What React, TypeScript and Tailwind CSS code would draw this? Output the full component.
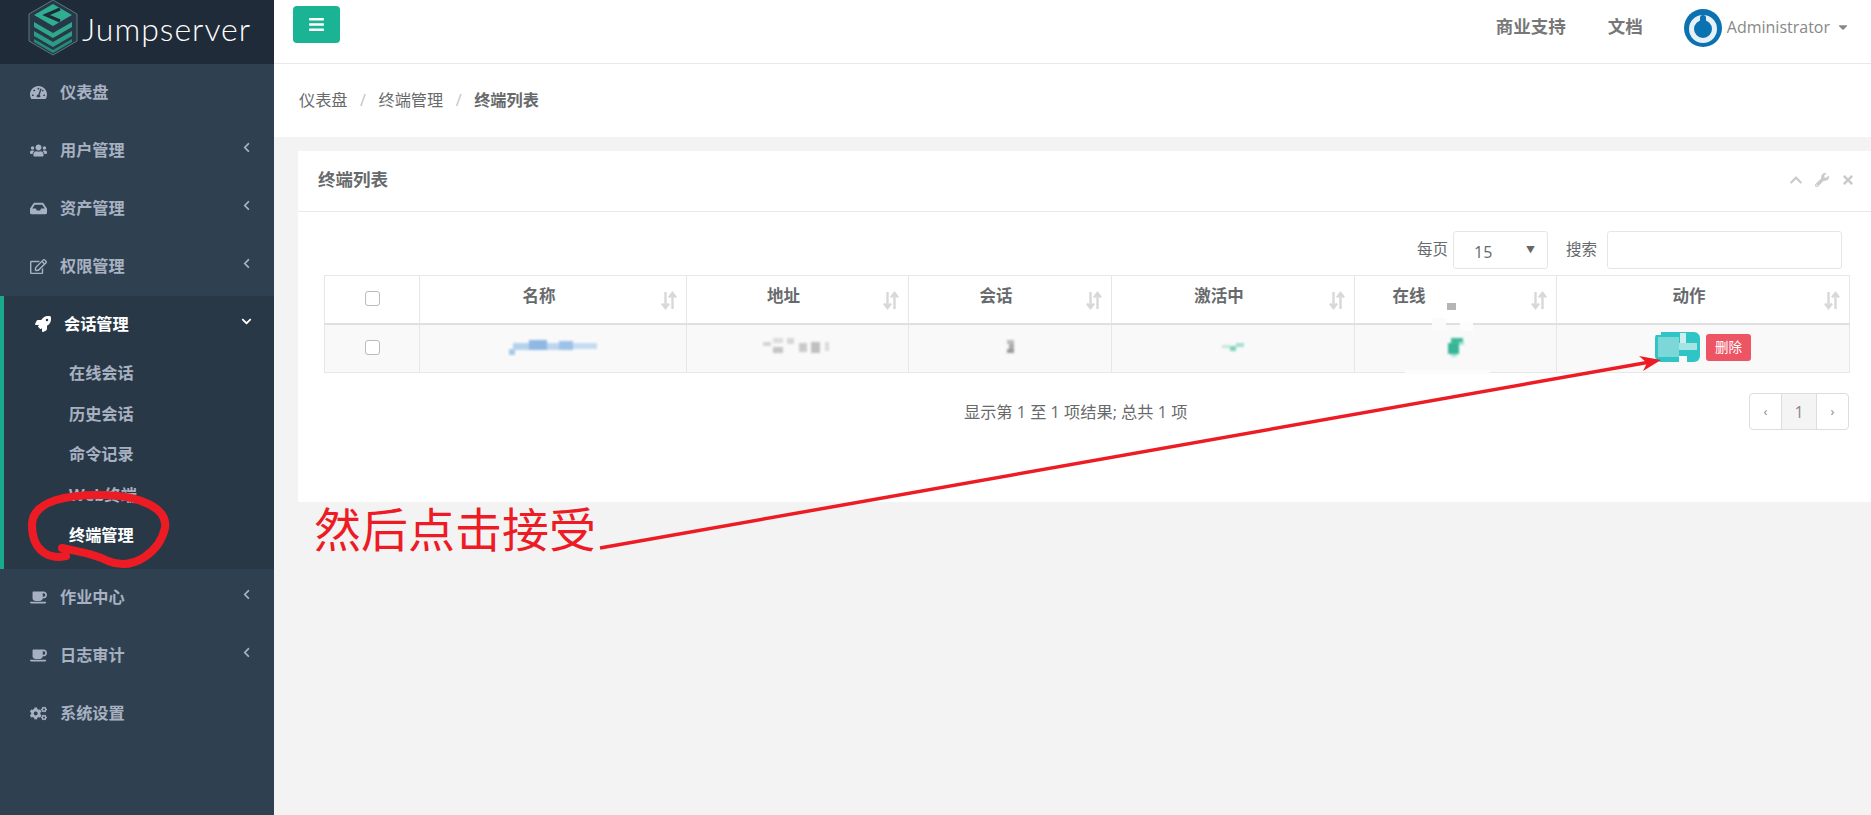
import { FaChevronDown, FaChevronLeft, FaChevronUp, FaCoffee, FaCogs, FaInbox, FaRegEdit, FaRocket, FaTachometerAlt, FaTimes, FaUsers, FaWrench, FaCaretDown, FaBars } from "react-icons/fa";
import type { ReactNode } from "react";

const cjk = "font-['Open_Sans','Noto_Sans_CJK_SC',sans-serif]";

function MenuItem({ icon, label, arrow }: { icon: ReactNode; label: string; arrow?: boolean }) {
  return (
    <div className="flex h-[58px] items-center pb-[2px] pl-[30px] pr-[22px] text-[16.2px] font-bold text-[#a7b1c2]">
      <span className="flex w-[30px] shrink-0 items-center text-[17px]">{icon}</span>
      <span className="flex-1">{label}</span>
      {arrow && <FaChevronLeft className="mb-1.5 text-[11px]" />}
    </div>
  );
}

function SubItem({ label, active }: { label: string; active?: boolean }) {
  return (
    <div className={`flex h-[40.5px] items-center pl-[65px] text-[16.2px] font-bold ${active ? "text-white" : "text-[#a7b1c2]"}`}>
      {label}
    </div>
  );
}

function Sidebar() {
  return (
    <aside className="flex w-[274px] shrink-0 flex-col bg-[#2f4050]">
      <div className="flex h-[64px] items-center bg-[#1f2b38] pl-7">
        <svg width="50" height="56" viewBox="0 0 50 56" className="mb-2 shrink-0">
          <polygon points="25,0 49,14 49,41 25,55 1,41 1,14" fill="#26384a" stroke="#5e7a78" strokeWidth="1" />
          <polygon points="25,4 44,15 25,26 6,15" fill="#2fae90" />
          <polygon points="6,22 25,33 44,22 44,27 25,38 6,27" fill="#2fa88a" />
          <polygon points="6,31 25,42 44,31 44,36 25,47 6,36" fill="#2b9c82" />
          <polygon points="6,39 25,50 44,39 44,42 25,53 6,42" fill="#258c75" />
          <polyline points="32,9 18,15 32,21" fill="none" stroke="#1f2b38" strokeWidth="3" />
        </svg>
        <span className="mb-[6px] ml-1 font-['Lato',sans-serif] text-[32px] font-light leading-none tracking-[1px] text-white">Jumpserver</span>
      </div>
      <MenuItem icon={<FaTachometerAlt />} label="仪表盘" />
      <MenuItem icon={<FaUsers />} label="用户管理" arrow />
      <MenuItem icon={<FaInbox />} label="资产管理" arrow />
      <MenuItem icon={<FaRegEdit />} label="权限管理" arrow />
      <div className="h-[273px] border-l-4 border-[#19aa8d] bg-[#293846]">
        <div className="flex h-[57px] items-center pb-[1px] pl-[31px] pr-[22px] text-[16.2px] font-bold text-white">
          <span className="flex w-[29px] shrink-0 items-center text-[16px]"><FaRocket /></span>
          <span className="flex-1">会话管理</span>
          <FaChevronDown className="mb-1.5 text-[11px]" />
        </div>
        <SubItem label="在线会话" />
        <SubItem label="历史会话" />
        <SubItem label="命令记录" />
        <SubItem label="Web终端" />
        <SubItem label="终端管理" active />
      </div>
      <MenuItem icon={<FaCoffee />} label="作业中心" arrow />
      <MenuItem icon={<FaCoffee />} label="日志审计" arrow />
      <MenuItem icon={<FaCogs />} label="系统设置" />
    </aside>
  );
}

function TopBar() {
  return (
    <header className="flex h-[64px] items-center border-b border-[#e7eaec] bg-white pl-[19px] pr-[21px]">
      <button className="mb-[14px] flex h-[37px] w-[47px] items-center justify-center rounded-[4px] bg-[#1ab394] text-[17px] text-white">
        <FaBars />
      </button>
      <div className="flex-1" />
      <span className="mb-[10px] text-[17.5px] font-bold text-[#777]">商业支持</span>
      <span className="mb-[10px] ml-[42px] text-[17.5px] font-bold text-[#777]">文档</span>
      <svg width="38" height="38" viewBox="0 0 38 38" className="mb-[8px] ml-[41px]">
        <circle cx="19" cy="19" r="19" fill="#0a72b0" />
        <circle cx="19" cy="20" r="11.5" fill="none" stroke="#e6f0f6" strokeWidth="5" />
        <rect x="16" y="6" width="6" height="17" rx="3" fill="#0a72b0" />
      </svg>
      <span className="mb-[10px] ml-[5px] text-[16px] text-[#888]">Administrator</span>
      <FaCaretDown className="mb-[9px] ml-[6px] text-[14px] text-[#888]" />
    </header>
  );
}

function SortIcon() {
  return (
    <svg width="16" height="19" viewBox="0 0 16 19" className="absolute right-[9px] top-[15px] text-[#d8d8d8]" fill="none" stroke="currentColor" strokeWidth="2.4">
      <path d="M4.5 1v15M1 12.5l3.5 4.5 3.5-4.5" />
      <path d="M11.5 18V3M8 6.5L11.5 2 15 6.5" />
    </svg>
  );
}

function Check() {
  return <span className="mx-auto block h-[15px] w-[15px] rounded-[3px] border border-[#bbb] bg-white" />;
}

function Th({ children, pad = "pr-[28px]" }: { children: ReactNode; pad?: string }) {
  return (
    <th className={`relative border-r border-[#e7e7e7] pb-[6px] text-center text-[16.5px] font-bold text-[#676a6c] ${pad}`}>
      {children}
      <SortIcon />
    </th>
  );
}

// pixelated, redacted bits of the screenshot
function Mosaic({ w, h, cells }: { w: number; h: number; cells: [number, number, number, number, string][] }) {
  return (
    <svg width={w} height={h} viewBox={`0 0 ${w} ${h}`} className="mx-auto block blur-[0.8px]">
      {cells.map(([x, y, cw, ch, fill], i) => (
        <rect key={i} x={x} y={y} width={cw} height={ch} fill={fill} />
      ))}
    </svg>
  );
}

function TerminalTable() {
  return (
    <table className="w-[1526px] table-fixed border border-[#e7e7e7] text-[14px]">
      <colgroup>
        <col className="w-[95px]" />
        <col className="w-[267px]" />
        <col className="w-[222px]" />
        <col className="w-[203px]" />
        <col className="w-[243px]" />
        <col className="w-[202px]" />
        <col />
      </colgroup>
      <thead>
        <tr className="h-[48px] border-b-2 border-[#e0e0e0]">
          <th className="border-r border-[#e7e7e7] pb-[2px]"><Check /></th>
          <Th>名称</Th>
          <Th>地址</Th>
          <Th>会话</Th>
          <Th>激活中</Th>
          <Th pad="pr-[93px]">在线</Th>
          <Th pad="pr-[28px] border-r-0">动作</Th>
        </tr>
      </thead>
      <tbody>
        <tr className="h-[49px] bg-[#f9f9f9]">
          <td className="border-r border-[#e7e7e7] pb-[2px]"><Check /></td>
          <td className="border-r border-[#e7e7e7] pb-[4px]">
            <Mosaic w={88} h={17} cells={[
              [0, 11, 6, 6, "#a9c9ea"], [4, 5, 16, 7, "#b4d1ee"], [20, 2, 18, 10, "#8fb8e2"],
              [38, 5, 12, 7, "#bcd6f0"], [50, 3, 14, 9, "#9dc2e8"], [64, 5, 24, 6, "#c4dbf2"],
            ]} />
          </td>
          <td className="border-r border-[#e7e7e7] pb-[4px]">
            <Mosaic w={70} h={16} cells={[
              [0, 4, 8, 4, "#d4d4d4"], [10, 0, 10, 5, "#dcdcdc"], [10, 9, 10, 6, "#c4c4c4"], [24, 0, 7, 6, "#d6d6d6"],
              [36, 5, 8, 9, "#cacaca"], [48, 4, 9, 11, "#c0c0c0"], [62, 4, 4, 9, "#dadada"],
            ]} />
          </td>
          <td className="border-r border-[#e7e7e7] pb-[4px]">
            <Mosaic w={9} h={13} cells={[[1, 0, 7, 4, "#bbb"], [3, 4, 5, 5, "#aaa"], [1, 9, 7, 4, "#999"]]} />
          </td>
          <td className="border-r border-[#e7e7e7] pb-[2px]">
            <Mosaic w={22} h={8} cells={[[0, 2, 8, 3, "#bfe9dc"], [8, 3, 6, 5, "#7fd2bb"], [14, 0, 8, 4, "#a5e0cf"]]} />
          </td>
          <td className="border-r border-[#e7e7e7] pb-[2px]">
            <Mosaic w={20} h={20} cells={[[2, 6, 11, 11, "#37b596"], [5, 1, 12, 6, "#3cbb9c"], [13, 5, 5, 3, "#a8e2d3"], [5, 17, 6, 3, "#b5e6d9"]]} />
          </td>
          <td className="pb-[2px]">
            <div className="ml-[98px] flex items-center gap-[6px]">
              <svg width="45" height="30" viewBox="0 0 45 30" className="blur-[0.4px]">
                <rect width="45" height="30" rx="6" fill="#2fc4c6" />
                <rect x="3" y="5" width="21" height="20" fill="#7cd8d8" />
                <rect x="24" y="11" width="18" height="7" fill="#a6e3e3" />
                <rect x="25" y="1" width="6" height="10" fill="#cdeeee" />
                <rect x="24" y="24" width="8" height="6" fill="#f9f9f9" />
                <rect x="0" y="0" width="6" height="3" fill="#f9f9f9" />
              </svg>
              <span className="flex h-[27px] w-[45px] items-center justify-center rounded-[3px] bg-[#ed5565] text-[13.5px] text-white">删除</span>
            </div>
          </td>
        </tr>
      </tbody>
    </table>
  );
}

function Pagination() {
  return (
    <div className="mr-[3px] flex h-[37px] overflow-hidden rounded-[4px] border border-[#ddd] text-[#888]">
      <span className="flex w-[31px] items-center justify-center text-[13px]">‹</span>
      <span className="flex w-[36px] items-center justify-center border-x border-[#ddd] bg-[#f4f4f4] text-[16px]">1</span>
      <span className="flex w-[31px] items-center justify-center text-[13px]">›</span>
    </div>
  );
}

function Card() {
  return (
    <section className="h-[351px] bg-white">
      <div className="flex h-[61px] items-center border-b border-[#e7eaec] pb-[3px] pl-5 pr-[16px]">
        <h2 className="flex-1 text-[17.5px] font-bold text-[#676a6c]">终端列表</h2>
        <div className="flex items-center gap-[12px] text-[#c8cacc]">
          <FaChevronUp className="text-[14px]" />
          <FaWrench className="text-[14px]" />
          <FaTimes className="text-[14px]" />
        </div>
      </div>
      <div className="pl-[26px] pr-[19px]">
        <div className="flex h-[63px] items-center justify-end pb-[6px] pr-[10px] pt-[19px] text-[15.5px] text-[#676a6c]">
          <span>每页</span>
          <div className="ml-[5px] flex h-[38px] w-[95px] items-center rounded-[3px] border border-[#e5e6e7] pl-[20px] pr-[12px]">
            <span className="flex-1 pt-[4px] text-[16px]">15</span>
            <span className="text-[9px] text-[#666]">▼</span>
          </div>
          <span className="ml-[18px]">搜索</span>
          <div className="ml-[10px] h-[38px] w-[235px] rounded-[3px] border border-[#e5e6e7]" />
        </div>
        <TerminalTable />
        <div className="relative mt-[20px] flex h-[37px] items-center justify-end">
          <span className="absolute left-[640px] mt-[2px] text-[16.2px] text-[#676a6c]">显示第 1 至 1 项结果; 总共 1 项</span>
          <Pagination />
        </div>
      </div>
    </section>
  );
}

function Annotations() {
  return (
    <>
      <svg width="1871" height="815" viewBox="0 0 1871 815" fill="none" className="pointer-events-none absolute left-0 top-0">
        {/* leftovers from the redaction around the online column */}
        <rect x="1447" y="303" width="9" height="7" fill="#b5b5b5" />
        <rect x="1432" y="318" width="14" height="12" fill="#fbfbfb" />
        <rect x="1460" y="322" width="13" height="9" fill="#fdfdfd" />
        <rect x="1405" y="370" width="85" height="4" fill="#fcfcfc" />
        <path
          d="M62 548 C80 552 92 553 108 561 C135 572 160 550 165 528 C168 508 140 496 105 495 C70 494 32 500 32 525 C32 550 48 560 66 556"
          stroke="#ed1c24"
          strokeWidth="8"
          strokeLinecap="round"
        />
        <path d="M600 548 L1650 362" stroke="#ed1c24" strokeWidth="3.5" />
        <polygon points="1661,360 1639,356 1647,363 1643,371" fill="#ed1c24" />
      </svg>
      <span className="absolute left-[314px] top-[495px] font-['Noto_Sans_CJK_SC',sans-serif] text-[47px] font-normal leading-[64px] text-[#ed1c24]">然后点击接受</span>
    </>
  );
}

export default function App() {
  return (
    <div className={`relative flex h-[815px] w-[1871px] overflow-hidden bg-[#f3f3f4] ${cjk}`}>
      <Sidebar />
      <main className="flex-1">
        <TopBar />
        <div className="flex h-[73px] items-center bg-white pl-[25px] text-[16.2px] text-[#676a6c]">
          <span>仪表盘</span>
          <span className="mx-[12.5px] text-[#c4c4c4]">/</span>
          <span>终端管理</span>
          <span className="mx-[12.5px] text-[#c4c4c4]">/</span>
          <span className="font-bold">终端列表</span>
        </div>
        <div className="pl-[24px] pt-[14px]">
          <Card />
        </div>
      </main>
      <Annotations />
    </div>
  );
}
